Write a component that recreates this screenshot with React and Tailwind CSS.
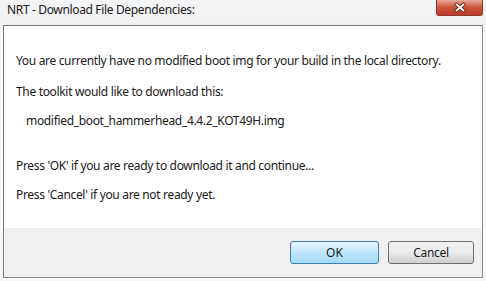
export default function App() {
  const font = { fontFamily: '"Noto Sans", "Open Sans", sans-serif' };
  return (
    <div className="w-[486px] h-[281px] bg-[#f7f8f9] flex flex-col overflow-hidden" style={font}>
      <div className="h-[25px] flex items-start justify-between bg-gradient-to-b from-[#f4f5f6] to-[#eff0f1]">
        <div className="pl-[7px] pt-[2px] text-[12px] leading-[16px] tracking-[-0.35px] text-[#1a1a1a]">NRT - Download File Dependencies:</div>
        <div className="mr-[3px] w-[47px] h-[16px] rounded-b-[3px] border border-t-0 border-[#8b3a2e] bg-gradient-to-b from-[#e9a99a] via-[#c9543c] to-[#c0392b] flex items-center justify-center">
          <svg width="14" height="11" viewBox="0 0 14 11">
            <path d="M3.5 2.5 L10.5 8.5 M10.5 2.5 L3.5 8.5" stroke="#5a2318" strokeWidth="3.5" strokeLinecap="square" />
            <path d="M3.5 2.5 L10.5 8.5 M10.5 2.5 L3.5 8.5" stroke="#ffffff" strokeWidth="1.8" strokeLinecap="square" />
          </svg>
        </div>
      </div>
      <div className="mx-[3px] h-[253px] border border-[#7a7a7a] border-r-[#8a8a8a] border-b-[#8a8a8a] flex flex-col">
        <div className="h-[202px] bg-white text-[12px] leading-[16px] tracking-[-0.33px] text-[#1a1a1a] pl-[12px] pt-[27px]">
          <div>You are currently have no modified boot img for your build in the local directory.</div>
          <div className="mt-[15px]">The toolkit would like to download this:</div>
          <div className="mt-[13px] pl-[10px]">modified_boot_hammerhead_4.4.2_KOT49H.img</div>
          <div className="mt-[29px]">Press 'OK' if you are ready to download it and continue...</div>
          <div className="mt-[13px]">Press 'Cancel' if you are not ready yet.</div>
        </div>
        <div className="flex-1 bg-[#f0f0f0] flex justify-end items-start pt-[13px] pr-[8px] gap-[9px]">
          <button className="w-[89px] h-[23px] rounded-[3px] border border-[#3c7fb1] bg-gradient-to-b from-[#eaf6fd] via-[#bee6fd] to-[#a7d9f5] text-[12px] text-[#1a1a1a]">OK</button>
          <button className="w-[86px] h-[23px] rounded-[3px] border border-[#707070] bg-gradient-to-b from-[#f2f2f2] via-[#ebebeb] to-[#cfcfcf] text-[12px] tracking-[-0.3px] text-[#1a1a1a]">Cancel</button>
        </div>
      </div>
    </div>
  );
}
